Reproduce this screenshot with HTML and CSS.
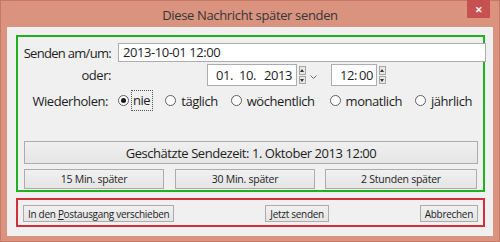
FILE: index.html
```html
<!DOCTYPE html>
<html lang="de">
<head>
    <meta charset="UTF-8">
    <title>Diese Nachricht später senden</title>
    <link rel="stylesheet" href="styles.css">
</head>
<body>
    <div class="window">
        <div class="titlebar">
            <span class="title">Diese Nachricht später senden</span>
            <div class="close">&#x2715;</div>
        </div>
        <div class="client">
            <div class="group green">
                <div class="form">
                    <div class="label first">Senden am/um:</div>
                    <div class="textbox">2013-10-01 12:00</div>

                    <div class="label">oder:</div>
                    <div class="pickers">
                        <div class="field date"><span>01.</span><span class="mm">10.</span><span class="yy">2013</span></div>
                        <div class="spin"><span class="up"></span><span class="down"></span></div>
                        <div class="drop">
                            <svg width="7" height="5" viewBox="0 0 7 5"><path d="M0.5 0.5 L3.5 3.5 L6.5 0.5" fill="none" stroke="#6d6d6d" stroke-width="1"/></svg>
                        </div>
                        <div class="field time"><span>12:</span><span class="min">00</span></div>
                        <div class="spin"><span class="up"></span><span class="down"></span></div>
                    </div>

                    <div class="label repeat">Wiederholen:</div>
                    <div class="radios">
                        <div class="radio checked"><span class="dot"></span><span class="focus">nie</span></div>
                        <div class="radio"><span class="dot"></span>täglich</div>
                        <div class="radio weekly"><span class="dot"></span>wöchentlich</div>
                        <div class="radio"><span class="dot"></span>monatlich</div>
                        <div class="radio"><span class="dot"></span>jährlich</div>
                    </div>
                </div>

                <div class="btn big">Geschätzte Sendezeit: 1. Oktober 2013 12:00</div>
                <div class="quick">
                    <div class="btn small">15 Min. später</div>
                    <div class="btn small">30 Min. später</div>
                    <div class="btn small wide">2 Stunden später</div>
                </div>
            </div>

            <div class="group red">
                <div class="btn small">In den&nbsp;<u>P</u>ostausgang verschieben</div>
                <div class="btn small now"><u>J</u>etzt senden</div>
                <div class="btn small cancel">Abbrechen</div>
            </div>
        </div>
    </div>
</body>
</html>
```

FILE: styles.css
```css
body {
    margin: 0;
    background: #d9937f;
    font-family: "Open Sans", "Noto Sans", sans-serif;
    color: #1e1e1e;
}
.window {
    width: 500px;
    height: 242px;
    box-sizing: border-box;
    border: 1px solid #c47a66;
    display: flex;
    flex-direction: column;
}
.titlebar {
    height: 26px;
    position: relative;
    display: flex;
    justify-content: center;
    align-items: center;
}
.title {
    font-size: 13px;
    letter-spacing: -0.35px;
    color: #363636;
    margin-top: 1px;
}
.close {
    position: absolute;
    top: -1px;
    right: 9px;
    width: 23px;
    height: 18px;
    background: #c75050;
    color: #fff;
    font-size: 9px;
    font-weight: bold;
    display: flex;
    align-items: center;
    justify-content: center;
}
.client {
    margin: 0 6px 5px 6px;
    flex: 1;
    background: #f0f0f0;
    padding: 8px 8px 0 9px;
}
.group {
    border: 2px solid #20b020;
}
.green {
    height: 157px;
    box-sizing: border-box;
    padding: 6px 5px 0 6px;
}
.red {
    margin-top: 6px;
    height: 29px;
    box-sizing: border-box;
    border-color: #d0303a;
    padding: 0 5px;
    display: flex;
    align-items: center;
}
.form {
    display: grid;
    grid-template-columns: 87px 1fr;
    grid-template-rows: 19px 22px 20px;
    row-gap: 2px;
    column-gap: 7px;
    align-items: center;
    font-size: 13px;
    letter-spacing: -0.45px;
    line-height: 18px;
}
.label {
    display: flex;
    justify-content: flex-end;
    white-space: nowrap;
}
.label.first {
    letter-spacing: -0.7px;
}
.label.repeat {
    padding-right: 3px;
    margin-top: 5px;
}
.textbox {
    height: 19px;
    margin-right: -1px;
    box-sizing: border-box;
    border: 1px solid #abadb3;
    background: #fff;
    padding-left: 4px;
    line-height: 17px;
}
.pickers {
    display: flex;
    align-items: center;
    padding-left: 89px;
}
.field {
    height: 22px;
    box-sizing: border-box;
    border: 1px solid #abadb3;
    background: #fff;
    line-height: 20px;
    display: flex;
    white-space: nowrap;
}
.date {
    width: 90px;
    padding: 0 4px 0 8px;
}
.date .mm {
    margin-left: 6px;
}
.date .yy {
    margin-left: auto;
}
.time {
    width: 46px;
    margin-left: 14px;
    padding: 0 3px 0 8px;
}
.time .min {
    margin-left: auto;
}
.spin {
    width: 7px;
    height: 18px;
    margin-left: 2px;
    display: flex;
    flex-direction: column;
    gap: 1px;
}
.spin span {
    flex: 1;
    border: 1px solid #a7a7a7;
    background: #e8e8e8;
    position: relative;
}
.spin span::after {
    content: "";
    position: absolute;
    left: 0;
    top: 2px;
    border-left: 2.5px solid transparent;
    border-right: 2.5px solid transparent;
}
.spin .up::after {
    border-bottom: 3px solid #333;
}
.spin .down::after {
    border-top: 3px solid #333;
}
.drop {
    margin-left: 4px;
    height: 10px;
    display: flex;
    align-items: flex-end;
}
.radios {
    display: flex;
    align-items: center;
    height: 20px;
    margin-top: 5px;
}
.radio {
    display: flex;
    align-items: center;
    margin-right: 13px;
}
.radio.weekly {
    margin-right: 15px;
}
.radio .dot {
    width: 9px;
    height: 9px;
    border: 1px solid #5f5f5f;
    border-radius: 50%;
    background: #fff;
    margin-right: 5px;
    position: relative;
}
.radio.checked .dot {
    margin-right: 3px;
}
.radio.checked .dot::after {
    content: "";
    position: absolute;
    left: 2px;
    top: 2px;
    width: 5px;
    height: 5px;
    border-radius: 50%;
    background: #1a1a1a;
}
.focus {
    outline: 1px dotted #555;
    padding: 0 2px 0 1px;
    line-height: 19px;
}
.btn {
    box-sizing: border-box;
    border: 1px solid #acacac;
    background: linear-gradient(#f0f0f0, #e5e5e5);
    display: flex;
    align-items: center;
    justify-content: center;
    color: #1e1e1e;
    white-space: nowrap;
}
.big {
    margin-top: 33px;
    height: 23px;
    font-size: 13px;
    letter-spacing: -0.45px;
}
.quick {
    display: flex;
    margin-top: 5px;
}
.small {
    font-size: 10.5px;
    height: 20px;
    letter-spacing: -0.25px;
}
.quick .small {
    width: 140px;
    margin-right: 11px;
}
.quick .small:nth-child(2) {
    margin-right: 10px;
}
.quick .wide {
    width: 152px;
    margin-right: 0;
}
.red .small {
    height: 17px;
    padding: 0 4px;
    margin-top: 2px;
    font-size: 10px;
    letter-spacing: -0.3px;
}
.red .now {
    margin-left: 91px;
}
.red .cancel {
    margin-left: auto;
}
```
